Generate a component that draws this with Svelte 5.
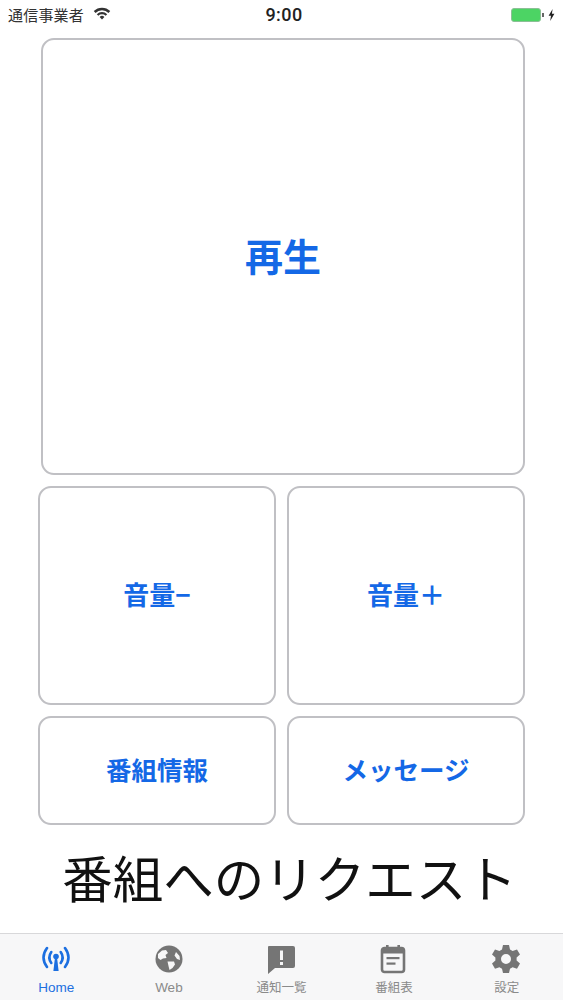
<script>
  const tabs = [
    { label: 'Home', icon: 'home', active: true },
    { label: 'Web', icon: 'web' },
    { label: '通知一覧', icon: 'notice' },
    { label: '番組表', icon: 'cal' },
    { label: '設定', icon: 'gear' }
  ];
</script>

<div class="page">
  <header class="status">
    <div class="left">
      <span class="carrier">通信事業者</span>
      <svg class="wifi" width="18" height="13" viewBox="0 0 16 12">
        <path d="M0.4 3.8 A10.8 10.8 0 0 1 15.6 3.8 L14 5.5 A8.5 8.5 0 0 0 2 5.5 Z" fill="#333" />
        <path d="M3.2 6.6 A6.8 6.8 0 0 1 12.8 6.6 L11.4 8 A4.9 4.9 0 0 0 4.6 8 Z" fill="#333" />
        <path d="M5.8 9.2 A3.2 3.2 0 0 1 10.2 9.2 L8 11.5 Z" fill="#333" />
      </svg>
    </div>
    <span class="time">9:00</span>
    <div class="right">
      <span class="battery"></span>
      <span class="nub"></span>
      <svg class="bolt" width="7" height="12" viewBox="0 0 7 12">
        <path d="M4.6 0 L0.6 6.8 H3 L2.2 12 L6.4 4.8 H3.9 Z" fill="#222" />
      </svg>
    </div>
  </header>

  <main class="content">
    <button class="btn play">再生</button>
    <div class="row vol">
      <button class="btn med">音量−</button>
      <button class="btn med">音量＋</button>
    </div>
    <div class="row info">
      <button class="btn small">番組情報</button>
      <button class="btn small">メッセージ</button>
    </div>
    <div class="request">番組へのリクエスト</div>
  </main>

  <nav class="tabbar">
    {#each tabs as t}
      <div class="tab" class:active={t.active}>
        <svg class="icon" width="32" height="32" viewBox="0 0 32 32">
          {#if t.icon === 'home'}
            <g fill="none" stroke="#1c6fe0" stroke-width="2.6" stroke-linecap="round">
              <path d="M7 5 C2.6 11 2.6 18 7 24" />
              <path d="M25 5 C29.4 11 29.4 18 25 24" />
              <path d="M11.3 9 C8.8 12.5 8.8 16.5 11.3 20" />
              <path d="M20.7 9 C23.2 12.5 23.2 16.5 20.7 20" />
            </g>
            <circle cx="16" cy="13.5" r="2.8" fill="#1c6fe0" />
            <path d="M14.9 15 H17.1 L18.6 28 H13.4 Z" fill="#1c6fe0" />
          {:else if t.icon === 'web'}
            <circle cx="16" cy="16" r="13.5" fill="#757575" />
            <path d="M5 11 L9 7.5 L13 7 L15 10 L12.5 12 L13.5 15 L10 15.5 L7.5 17 L5 15 Z M14.5 18.5 L21 18.5 L22 21.5 L19.5 25 L16.5 27 L15.5 23 Z M23 9 L26.5 13 L27 17 L24 16 L21.5 12.5 Z" fill="#f6f6f7" />
          {:else if t.icon === 'notice'}
            <path d="M4 3 H28 A2 2 0 0 1 30 5 V23 A2 2 0 0 1 28 25 H10 L3 31 V4 A1 1 0 0 1 4 3 Z" fill="#757575" />
            <rect x="15" y="7.5" width="3" height="9.5" fill="#f6f6f7" />
            <rect x="15" y="19" width="3" height="3" fill="#f6f6f7" />
          {:else if t.icon === 'cal'}
            <rect x="4" y="5" width="22" height="24" rx="2.5" fill="none" stroke="#757575" stroke-width="2.6" />
            <rect x="4" y="5" width="22" height="5.5" fill="#757575" />
            <rect x="8" y="2" width="2.6" height="4" fill="#757575" />
            <rect x="19.4" y="2" width="2.6" height="4" fill="#757575" />
            <rect x="8.5" y="14" width="13" height="2.2" fill="#757575" />
            <rect x="8.5" y="19.5" width="9" height="2.2" fill="#757575" />
          {:else}
            <path fill="#757575" fill-rule="evenodd" d="M12 2 H18 L19 6.4 L21.6 7.9 L26 6.5 L29 11.6 L25.6 14.6 V17.6 L29 20.6 L26 25.7 L21.6 24.3 L19 25.8 L18 30 H12 L11 25.8 L8.4 24.3 L4 25.7 L1 20.6 L4.4 17.6 V14.6 L1 11.6 L4 6.5 L8.4 7.9 L11 6.4 Z M15 11 A5 5 0 1 0 15 21 A5 5 0 1 0 15 11 Z" />
          {/if}
        </svg>
        <span class="label">{t.label}</span>
      </div>
    {/each}
  </nav>
</div>

<style>
  :global(body) {
    margin: 0;
    background: #fff;
    font-family: "Noto Sans CJK JP", "Liberation Sans", sans-serif;
  }
  .page {
    width: 563px;
    height: 1000px;
    display: flex;
    flex-direction: column;
    overflow: hidden;
  }
  .status {
    height: 29px;
    flex: none;
    display: flex;
    align-items: center;
    justify-content: space-between;
    position: relative;
    padding: 0 8px 0 8px;
    color: #222;
  }
  .left, .right {
    display: flex;
    align-items: center;
  }
  .carrier {
    font-size: 15px;
    color: #333;
    letter-spacing: 0.2px;
  }
  .wifi { margin-left: 9px; margin-top: -2px; }
  .time {
    position: absolute;
    left: 0;
    right: -5px;
    text-align: center;
    font: 500 18px Roboto, "Liberation Sans", sans-serif;
    letter-spacing: 0.4px;
    color: #222;
    pointer-events: none;
  }
  .battery {
    width: 30px;
    height: 14px;
    background: #4cd464;
    border: 1px solid #8cbf96;
    box-sizing: border-box;
    border-radius: 3px;
  }
  .nub {
    width: 2px;
    height: 4px;
    background: #666;
    margin-left: 1px;
  }
  .bolt { margin-left: 4px; }
  .content {
    flex: 1;
    display: flex;
    flex-direction: column;
    padding: 9px 38px 0 38px;
    min-height: 0;
  }
  .btn {
    display: flex;
    align-items: center;
    justify-content: center;
    background: #fff;
    border: 2px solid #c0c0c4;
    border-radius: 13px;
    box-sizing: border-box;
    padding: 0 0 5px;
    color: #1468e6;
    font-family: "Noto Sans CJK JP", sans-serif;
    font-weight: 700;
  }
  .play {
    height: 437px;
    margin-left: 3px;
    font-size: 38px;
    flex: none;
  }
  .row {
    display: grid;
    grid-template-columns: 238px 238px;
    gap: 11px;
    flex: none;
  }
  .vol { margin-top: 11px; height: 219px; }
  .info { margin-top: 11px; height: 109px; }
  .med { font-size: 26px; }
  .small { font-size: 25.5px; }
  .request {
    margin: 16px -10px 0 6px;
    text-align: center;
    font-size: 50.5px;
    line-height: 70px;
    color: #111;
    white-space: nowrap;
  }
  .tabbar {
    height: 67px;
    flex: none;
    display: grid;
    grid-template-columns: repeat(5, 1fr);
    background: #f7f7f8;
    border-top: 1px solid #d8d8da;
    box-sizing: border-box;
  }
  .tab {
    display: flex;
    flex-direction: column;
    align-items: center;
    color: #8a8a8a;
    padding-top: 9px;
  }
  .tab.active { color: #1c6fe0; }
  .label {
    font-size: 13.5px;
    line-height: 16px;
    margin-top: 5px;
    font-family: "Liberation Sans", "Noto Sans CJK JP", sans-serif;
  }
  .tab:not(.active) .label { font-size: 12.5px; }
  .tab:nth-child(2) .label { font-size: 13.5px; }
</style>
